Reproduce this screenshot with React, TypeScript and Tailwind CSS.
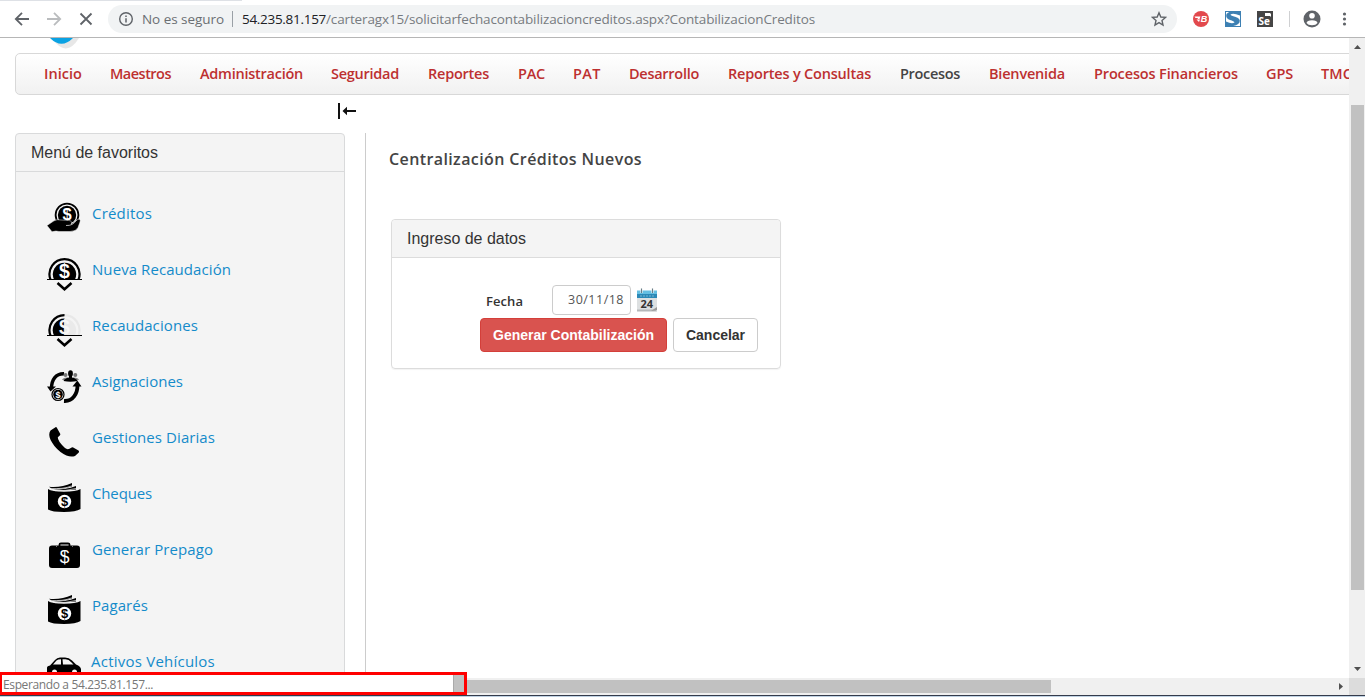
import { useLayoutEffect, useRef, type ReactNode } from "react";

/** Text whose tracking is adjusted so that it fills the given width. */
function Fit({ w, children, className = "" }: { w: number; children: string; className?: string }) {
  const ref = useRef<HTMLSpanElement>(null);
  useLayoutEffect(() => {
    const el = ref.current;
    if (!el) return;
    el.style.letterSpacing = "0px";
    const natural = el.getBoundingClientRect().width;
    el.style.letterSpacing = `${(w - natural) / children.length}px`;
  }, [w, children]);
  return (
    <span ref={ref} className={`inline-block whitespace-pre ${className}`}>
      {children}
    </span>
  );
}

const nav: [string, number, number][] = [
  ["Inicio", 38, 28],
  ["Maestros", 61, 29],
  ["Administración", 103, 28],
  ["Seguridad", 68, 29],
  ["Reportes", 61, 29],
  ["PAC", 27, 28],
  ["PAT", 28, 28],
  ["Desarrollo", 70, 29],
  ["Reportes y Consultas", 143, 29],
  ["Procesos", 60, 29],
  ["Bienvenida", 76, 29],
  ["Procesos Financieros", 144, 28],
  ["GPS", 27, 28],
  ["TMC", 31, 0],
];

function Dollar({ x, y, size, fill }: { x: number; y: number; size: number; fill: string }) {
  return (
    <text x={x} y={y} fontSize={size} fill={fill} textAnchor="middle" fontWeight="bold" fontFamily="Liberation Sans, sans-serif">
      $
    </text>
  );
}

function Icon({ children, dy = 0 }: { children: ReactNode; dy?: number }) {
  return (
    <svg width="36" height="36" viewBox={`0 ${-dy} 36 36`} className="block shrink-0">
      {children}
    </svg>
  );
}

const CreditIcon = () => (
  <Icon>
    <circle cx="20" cy="15" r="11.400" fill="none" stroke="#000" strokeWidth="1.800" />
    <circle cx="20" cy="15" r="9.200" fill="#000" />
    <Dollar x={20} y={20.300} size={16.500} fill="#fff" />
    <path
      d="M0 25.500 L7 20.800 Q10 19 14 20 L22 20.500 Q25.500 21 24.300 24 L31 19.300 Q34 18.500 33 22 L31 27.500 Q29 31.500 23 31.500 H12 Q9 30.500 5 31.800 Z"
      fill="#000"
      stroke="#f4f4f4"
      strokeWidth="0.500"
    />
    <path d="M19 25.500 Q26 26 29.500 20" fill="none" stroke="#f4f4f4" strokeWidth="0.700" />
  </Icon>
);

const CoinDownIcon = ({ half = false }: { half?: boolean }) => (
  <Icon>
    <path d="M3.500 23.500 A15 15 0 1 1 31.500 23.500" fill="none" stroke={half ? "#e8e8e8" : "#000"} strokeWidth="2.200" />
    <path d="M7 23.500 A11.700 11.700 0 1 1 28 23.500 Z" fill={half ? "#eaeaea" : "#000"} />
    {half && (
      <>
        <path d="M3.500 23.500 A15 15 0 0 1 17.500 3.100" fill="none" stroke="#000" strokeWidth="2.200" />
        <path d="M7 23.500 A11.700 11.700 0 0 1 17.500 6.500 V23.500 Z" fill="#000" />
      </>
    )}
    <Dollar x={17.500} y={22} size={19.500} fill={half ? "#f7f7f7" : "#fff"} />
    <path d="M0 23.500 H35" stroke="#000" strokeWidth="1.200" />
    <path d="M10.500 27 L17.500 33.300 L24.500 27" fill="none" stroke="#000" strokeWidth="2.500" />
  </Icon>
);

const AssignIcon = () => (
  <Icon dy={1.5}>
    <path d="M17 4.200 C9 3.900 4.500 10 4.500 19" fill="none" stroke="#000" strokeWidth="3.400" />
    <path d="M0 17 H9 L3.500 22 Z" fill="#000" />
    <path d="M17 31.500 C26 32 30.500 24 30.500 16" fill="none" stroke="#000" strokeWidth="3.800" />
    <path d="M25.500 17 L30.300 11 L34.500 17 Z" fill="#000" />
    <circle cx="18.500" cy="5.500" r="2" fill="#777" />
    <circle cx="28.300" cy="5.500" r="2" fill="#777" />
    <path d="M15 10.500 Q16 7.500 21 8 V10.500 M26 10.500 V8 Q31 7.500 32 10.500" fill="#888" />
    <ellipse cx="23.500" cy="4" rx="2.400" ry="3.200" fill="#000" />
    <path d="M16.500 11.500 Q17.500 9 22 8 V5.500 H25 V8 Q29.500 9 30.500 11.500 Q23.500 13 16.500 11.500 Z" fill="#000" />
    <circle cx="11" cy="25" r="6" fill="#f4f4f4" stroke="#000" strokeWidth="1.200" />
    <circle cx="11" cy="25" r="4.800" fill="#000" />
    <Dollar x={11} y={28.200} size={9} fill="#fff" />
  </Icon>
);

const PhoneIcon = () => (
  <Icon dy={1}>
    <path
      d="M3.500 5.500 L8.500 2.200 Q9.500 1.800 10 3 L13.300 9 Q13.500 10 12.500 10.800 L10.800 12.300 Q10.500 16 18 23 Q20 24.800 22.500 23.800 L24.200 22.700 Q25 22 26.200 22.500 L31.500 25.500 Q32.500 26.300 31.800 27.500 L28 31 Q22 33.300 13.500 27 C4 19 0 10 3.500 5.500 Z"
      fill="#000"
    />
  </Icon>
);

const CashIcon = () => (
  <Icon>
    <path d="M1 9 Q5 11.800 17 11.800 T33.500 9 V29 Q29 32 17 32 T1 29.500 Z" fill="#000" />
    <path d="M2 6.800 Q14 8 25 3 V6.500 Q17 9 5 9 Z M6 9.800 Q18 10 29 6 V9.500 Q19 11 6 9.800 Z" fill="#000" />
    <path d="M3 8.400 Q16 9.500 25 5.800 M8 10.700 Q19 11 29 8.500" fill="none" stroke="#f4f4f4" strokeWidth="0.700" />
    <circle cx="17.500" cy="21.500" r="6.700" fill="#fff" />
    <Dollar x={17.500} y={26} size={13} fill="#000" />
  </Icon>
);

const CaseIcon = () => (
  <Icon dy={1}>
    <path d="M12.500 10 V7.500 Q12.500 6.500 14 6.500 H21 Q22.500 6.500 22.500 7.500 V10" fill="none" stroke="#000" strokeWidth="1.800" />
    <rect x="2" y="8.500" width="31" height="22.500" rx="3" fill="#000" />
    <path d="M9.500 9 V10 M25.500 9 V10" stroke="#aaa" strokeWidth="0.700" />
    <text x="17.500" y="26" fontSize="17.500" fill="#fff" textAnchor="middle" fontFamily="Liberation Sans, sans-serif">
      $
    </text>
  </Icon>
);

const CarIcon = () => (
  <Icon dy={1.500}>
    <path d="M0 23 V18 Q0 16.500 3 16 L8 10.500 Q10 8 13 8 H18 Q22 8 25 11 L29 15 Q34 17 34 20 V25 H0 Z" fill="#000" />
    <path d="M6 15 L9.500 11 Q11 9.700 14 9.700 V15 Z M15.500 9.700 H18.500 Q22 10 24 12.500 L26.500 15 H16 Z" fill="#f4f4f4" />
    <circle cx="7.500" cy="22.500" r="2.500" fill="#f4f4f4" />
    <circle cx="27.500" cy="22.500" r="2.500" fill="#f4f4f4" />
  </Icon>
);

const favorites: { label: string; w: number; icon: ReactNode }[] = [
  { label: "Créditos", w: 60, icon: <CreditIcon /> },
  { label: "Nueva Recaudación", w: 139, icon: <CoinDownIcon /> },
  { label: "Recaudaciones", w: 106, icon: <CoinDownIcon half /> },
  { label: "Asignaciones", w: 91, icon: <AssignIcon /> },
  { label: "Gestiones Diarias", w: 123, icon: <PhoneIcon /> },
  { label: "Cheques", w: 60, icon: <CashIcon /> },
  { label: "Generar Prepago", w: 121, icon: <CaseIcon /> },
  { label: "Pagarés", w: 56, icon: <CashIcon /> },
  { label: "Activos Vehículos", w: 124, icon: <CarIcon /> },
];

function BrowserBar() {
  return (
    <header className="flex h-[38px] shrink-0 flex-col border-b border-[#b6b6b6] bg-white">
      <div className="h-px w-[242px] shrink-0 bg-[#dee1e6]" />
      <div className="flex h-9 items-center">
        <svg width="108" height="36" viewBox="0 0 108 36" fill="none" strokeWidth="1.800" className="shrink-0">
          <path d="M29 18 H16 M22 11.800 L15.800 18 L22 24.200" stroke="#5f6368" />
          <path d="M47 18 H60 M54 11.800 L60.200 18 L54 24.200" stroke="#babcbe" />
          <path d="M80.500 12.500 L91.500 23.500 M91.500 12.500 L80.500 23.500" stroke="#5f6368" />
        </svg>
        <div className="flex h-7 w-[1069px] shrink-0 items-center rounded-full bg-[#f1f3f4] pr-2.5 pl-2.5 font-['Open_Sans',sans-serif] text-[13.500px] leading-7">
          <svg width="16" height="16" viewBox="0 0 16 16" fill="none" className="shrink-0">
            <circle cx="8" cy="8" r="6.300" stroke="#5f6368" strokeWidth="1.400" />
            <path d="M8 7.200 V11.500 M8 4.500 V6" stroke="#5f6368" strokeWidth="1.500" />
          </svg>
          <Fit w={82} className="ml-2 text-[#6b6f73]">No es seguro</Fit>
          <span className="mr-[9px] ml-2 h-4 w-px bg-[#9aa0a6]" />
          <Fit w={84} className="text-[#202124]">54.235.81.157</Fit>
          <Fit w={489} className="text-[#777b80]">/carteragx15/solicitarfechacontabilizacioncreditos.aspx?ContabilizacionCreditos</Fit>
          <svg width="16" height="16" viewBox="0 0 16 16" className="ml-auto">
            <path d="M8 1.800 L9.800 6 L14.500 6.400 L11 9.500 L12 14 L8 11.600 L4 14 L5 9.500 L1.500 6.400 L6.200 6 Z" fill="none" stroke="#5f6368" strokeWidth="1.400" />
          </svg>
        </div>
        <svg width="188" height="36" viewBox="0 0 188 36" className="shrink-0">
          <circle cx="24" cy="18" r="8" fill="#e2494d" />
          <path d="M17.500 15.500 H23.500 L22.500 18 H21 L20.500 17 H18.500 Z M19.500 18.500 H23 L22 21 Z" fill="#fff" />
          <text x="27" y="21.200" fill="#fff" fontSize="9" fontStyle="italic" fontWeight="bold" textAnchor="middle" fontFamily="Liberation Sans, sans-serif">B</text>
          <rect x="48.500" y="10.500" width="15" height="15" fill="#fff" stroke="#3d80b3" />
          <path d="M63 11 V14.500 Q56 11.500 53.500 13.500 Q54 15 58 15.800 Q64 17.500 62.500 21.500 Q60 26 49 25 V20.500 Q55 23.500 57.500 21.500 Q57 20 53 19 Q48 17 49.500 13 Q52 9.500 63 11 Z" fill="#3d80b3" />
          <rect x="80" y="10" width="16" height="16" fill="#454545" />
          <path d="M88 12 H93 V13 L94 12 V16 L93 15 H88 Z" fill="#fff" />
          <text x="87.300" y="24.300" fill="#fff" fontSize="10" fontWeight="bold" textAnchor="middle" fontFamily="Open Sans, sans-serif">Se</text>
          <path d="M112.500 10 V26" stroke="#cfd0d2" />
          <circle cx="135" cy="18" r="8.500" fill="#5f6368" />
          <circle cx="135" cy="14.800" r="2.800" fill="#fff" />
          <path d="M129.500 22 Q130 19.300 135 19.300 T140.500 22 Q139 24.200 135 24.200 T129.500 22 Z" fill="#fff" />
          <g fill="#5f6368">
            <circle cx="167.500" cy="13" r="1.600" />
            <circle cx="167.500" cy="18" r="1.600" />
            <circle cx="167.500" cy="23" r="1.600" />
          </g>
        </svg>
      </div>
    </header>
  );
}

function CalendarIcon() {
  return (
    <svg width="22" height="24" viewBox="0 0 22 24" className="mt-[3px] ml-[5px] shrink-0">
      <path d="M1 10 H21 V22.500 H1 Z" fill="#dde0e1" />
      <path d="M1 21.500 H20 L21 23.500 H1 Z" fill="#b5b8ba" />
      <path d="M1 2.500 H21 V10 H1 Z" fill="#65bfe2" />
      <path d="M1 6 H21 V10 H1 Z" fill="#2b89b7" />
      <path d="M5.500 0.500 V5 M16.500 0.500 V5" stroke="#eee" strokeWidth="2.200" />
      <path d="M5.500 0.500 V5 M16.500 0.500 V5" stroke="#667e89" strokeWidth="1" />
      <path d="M4 8 H18" stroke="#79b5d0" strokeWidth="1" strokeDasharray="2 1" />
      <path d="M15 23 L21 19 V22 Z" fill="#999" />
      <text x="10.800" y="20" fontSize="11" fontWeight="bold" textAnchor="middle" fill="#333" fontFamily="Open Sans, sans-serif">24</text>
    </svg>
  );
}

export default function App() {
  return (
    <div className="relative flex h-[697px] w-[1365px] flex-col overflow-hidden bg-white font-['Open_Sans',sans-serif]">
      <BrowserBar />

      <div className="flex h-[640px] shrink-0">
        <main className="h-full w-[1349px] overflow-hidden">
          <div className="h-[15px] pl-12">
            <svg width="32" height="15" viewBox="0 0 32 15">
              <path d="M4 0 Q18 21 31 0 Z" fill="#ddd" opacity="0.700" />
              <path d="M2 0 Q13.500 11.500 25 0 Z" fill="#0aa2e3" />
            </svg>
          </div>

          <nav className="ml-[15px] flex h-[42px] w-[1400px] items-center rounded-[5px] border border-[#d8d8d8] bg-linear-to-b from-white to-[#f1f1f1] pl-7 text-[14.500px] leading-5 font-semibold text-[#bd3030]">
            {nav.map(([label, w, gap]) => (
              <div key={label} className="shrink-0 whitespace-nowrap" style={{ width: w + gap }}>
                <Fit w={w} className={label === "Procesos" ? "text-[#444]" : ""}>{label}</Fit>
              </div>
            ))}
          </nav>

          <div className="h-[38px] pt-[7px] pl-[337px]">
            <svg width="20" height="18" viewBox="0 0 20 18" className="block">
              <path d="M1 1 H3 V17 H1 Z M5.500 9 L10 4.800 V8 H19 V10 H10 V13.200 Z" fill="#111" />
            </svg>
          </div>

          <div className="flex h-[545px]">
            <aside className="ml-[15px] h-[600px] w-[330px] shrink-0 rounded-t border border-[#d9dadb] bg-[#f4f4f4]">
              <h2 className="flex h-[38px] items-center border-b border-[#d9dadb] pl-[15px] font-['Liberation_Sans',sans-serif] text-base text-[#333]">
                <Fit w={127}>Menú de favoritos</Fit>
              </h2>
              <ul className="pt-7">
                {favorites.map((f, i) => (
                  <li key={f.label} className="flex h-14 pl-[31px]">
                    {f.icon}
                    <a className={`mt-px block text-[15px] leading-6 text-[#148bca] ${i === 8 ? "ml-2" : "ml-[9px]"}`}>
                      <Fit w={f.w}>{f.label}</Fit>
                    </a>
                  </li>
                ))}
              </ul>
            </aside>

            <section className="ml-5 flex-1 border-l border-[#ccc]">
              <h1 className="mt-[14px] ml-[23px] h-6 text-base leading-6 font-semibold text-[#444]">
                <Fit w={253}>Centralización Créditos Nuevos</Fit>
              </h1>
              <div className="mt-12 ml-[25px] h-[150px] w-[390px] rounded border border-[#dcdcdc] shadow-[0_1px_1px_rgba(0,0,0,0.05)]">
                <h2 className="flex h-[38px] items-center rounded-t border-b border-[#dcdcdc] bg-[#f4f4f4] pl-[15px] font-['Liberation_Sans',sans-serif] text-base text-[#333]">
                  <Fit w={119}>Ingreso de datos</Fit>
                </h2>
                <div className="flex pt-[27px] pl-[94px]">
                  <label className="mt-[5px] w-[66px] text-[13px] leading-[22px] font-semibold text-[#333]">
                    <Fit w={37}>Fecha</Fit>
                  </label>
                  <div className="flex h-[30px] w-[79px] items-center rounded border border-[#ccc] pt-px pl-[15px] text-[12.500px] text-[#555]">
                    <Fit w={56}>30/11/18</Fit>
                  </div>
                  <CalendarIcon />
                </div>
                <div className="mt-[3px] ml-[88px] flex gap-1.5 font-['Liberation_Sans',sans-serif] text-sm font-bold">
                  <button className="h-[34px] w-[187px] rounded border border-[#d43f3a] bg-[#d9534f] text-white">
                    <Fit w={161}>Generar Contabilización</Fit>
                  </button>
                  <button className="h-[34px] w-[85px] rounded border border-[#ccc] bg-white text-[#333]">
                    <Fit w={59}>Cancelar</Fit>
                  </button>
                </div>
              </div>
            </section>
          </div>
        </main>

        <div className="flex h-full w-4 flex-col items-center bg-[#f0f0f0]">
          <svg width="16" height="67" viewBox="0 0 16 67">
            <path d="M5 11 L8.500 7 L12 11 Z" fill="#505050" />
          </svg>
          <div className="ml-px h-[485px] w-[13px] bg-[#c1c1c1]" />
          <svg width="16" height="88" viewBox="0 0 16 88">
            <path d="M5 77 L8.500 81 L12 77 Z" fill="#505050" />
          </svg>
        </div>
      </div>

      <div className="flex h-[17px] shrink-0 items-center bg-[#f0f0f0]">
        <div className="ml-[453px] h-[13px] w-[598px] bg-[#c1c1c1]" />
        <svg width="8" height="9" viewBox="0 0 8 9" className="ml-[287px]">
          <path d="M1 1 L5 4.500 L1 8 Z" fill="#505050" />
        </svg>
        <div className="ml-auto h-[17px] w-4 bg-[#dcdcdc]" />
      </div>
      <div className="h-px shrink-0 bg-[#343b4b]" />
      <div className="h-px shrink-0 bg-[#bfd1e2]" />

      <div className="absolute top-[672px] left-[-1px] flex h-[23px] w-[468px] border-[3px] border-[#ff0000] bg-[#c1c1c1]">
        <div className="h-full w-[452px] border-r border-[#aaa] bg-white pl-px text-[12px] leading-[19px] text-[#777]">
          <Fit w={150}>Esperando a 54.235.81.157...</Fit>
        </div>
      </div>
    </div>
  );
}
